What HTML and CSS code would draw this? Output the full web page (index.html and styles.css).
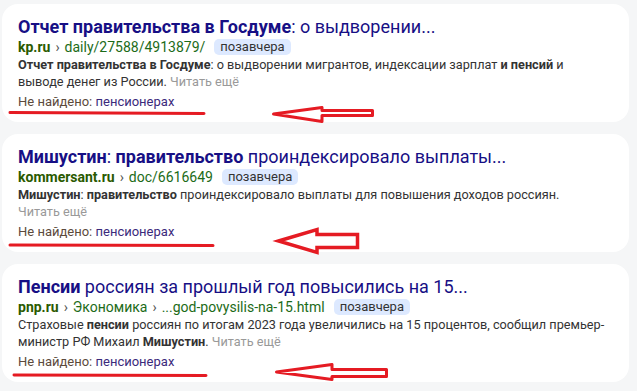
FILE: index.html
```html
<!DOCTYPE html>
<html lang="ru">
<head>
    <meta charset="UTF-8">
    <meta name="viewport" content="width=device-width, initial-scale=1.0">
    <title>Поиск</title>
    <link rel="stylesheet" href="styles.css">
</head>
<body>
    <div class="results">
        <div class="card">
            <div class="title"><b>Отчет правительства в Госдуме</b>: о выдворении...</div>
            <div class="url-line">
                <span class="domain">kp.ru</span>
                <span class="sep">›</span>
                <span class="path">daily/27588/4913879/</span>
                <span class="badge">позавчера</span>
            </div>
            <div class="snippet"><b>Отчет правительства в Госдуме</b>: о выдворении мигрантов, индексации зарплат <b>и пенсий</b> и выводе денег из России. <span class="more">Читать ещё</span></div>
            <div class="missing">Не найдено: <span class="word">пенсионерах</span></div>
            <svg class="marks" width="627" height="118" viewBox="0 0 627 118">
                <path d="M8 108.5 L202 109.5" />
                <path d="M271.5 110 L320 103.5 L320 106.5 L370.5 106.5 L370.5 111.5 L320 111.5 L320 117.5 Z" />
            </svg>
        </div>

        <div class="card">
            <div class="title"><b>Мишустин</b>: <b>правительство</b> проиндексировало выплаты...</div>
            <div class="url-line">
                <span class="domain">kommersant.ru</span>
                <span class="sep">›</span>
                <span class="path">doc/6616649</span>
                <span class="badge">позавчера</span>
            </div>
            <div class="snippet"><b>Мишустин</b>: <b>правительство</b> проиндексировало выплаты для повышения доходов россиян. <span class="more">Читать ещё</span></div>
            <div class="missing">Не найдено: <span class="word">пенсионерах</span></div>
            <svg class="marks" width="627" height="118" viewBox="0 0 627 118">
                <path d="M8 111 L211 111.5" />
                <path class="thick" d="M276.5 107 L315 95.5 L315 100.5 L355.5 100.5 L355.5 113.5 L315 113.5 L315 118.5 Z" />
            </svg>
        </div>

        <div class="card">
            <div class="title"><b>Пенсии</b> россиян за прошлый год повысились на 15...</div>
            <div class="url-line">
                <span class="domain">pnp.ru</span>
                <span class="sep">›</span>
                <span class="path">Экономика</span>
                <span class="sep">›</span>
                <span class="path">...god-povysilis-na-15.html</span>
                <span class="badge">позавчера</span>
            </div>
            <div class="snippet">Страховые <b>пенсии</b> россиян по итогам 2023 года увеличились на 15 процентов, сообщил премьер-министр РФ Михаил <b>Мишустин</b>. <span class="more">Читать ещё</span></div>
            <div class="missing">Не найдено: <span class="word">пенсионерах</span></div>
            <svg class="marks" width="627" height="118" viewBox="0 0 627 118">
                <path d="M12 111 L204 111.5" />
                <path d="M274.5 108 L330 100.5 L330 105.5 L384.5 105.5 L384.5 112.5 L330 112.5 L330 115.5 Z" />
            </svg>
        </div>
    </div>
</body>
</html>
```

FILE: styles.css
```css
body {
    margin: 0;
    background-color: #f5f6f7;
    font-family: Roboto, 'Noto Sans', sans-serif;
    color: #333;
}

.results {
    display: flex;
    flex-direction: column;
    gap: 12px;
    padding: 4px 8px 8px 2px;
}

.card {
    position: relative;
    width: 627px;
    box-sizing: border-box;
    padding: 12px 16px 10px;
    background-color: #fff;
    border-radius: 16px;
}

.title {
    font-size: 18px;
    line-height: 22px;
    color: #170f85;
    white-space: nowrap;
}

.url-line {
    display: flex;
    align-items: center;
    gap: 5px;
    height: 18px;
    font-size: 14px;
    color: #1c6b18;
    white-space: nowrap;
}

.domain {
    font-weight: bold;
    color: #2a5a00;
}

.sep {
    color: #555;
}

.badge {
    margin-left: 4px;
    padding: 0 6px;
    line-height: 16px;
    font-size: 13px;
    color: #333;
    background-color: #dde9ff;
    border-radius: 5px;
}

.snippet {
    padding-right: 6px;
    font-size: 12.7px;
    line-height: 17px;
    color: #333;
}

.more {
    color: #999;
    white-space: nowrap;
}

.missing {
    margin-top: 2px;
    font-size: 13px;
    line-height: 20px;
    color: #5c4a3c;
}

.word {
    color: #3b2a7c;
}

.marks {
    position: absolute;
    left: 0;
    top: 0;
    overflow: visible;
    pointer-events: none;
}

.marks path {
    fill: none;
    stroke: #e51b23;
    stroke-width: 3;
    stroke-linecap: round;
    stroke-linejoin: round;
}

.marks path.thick {
    stroke-width: 3.5;
    stroke-linejoin: miter;
}
```
